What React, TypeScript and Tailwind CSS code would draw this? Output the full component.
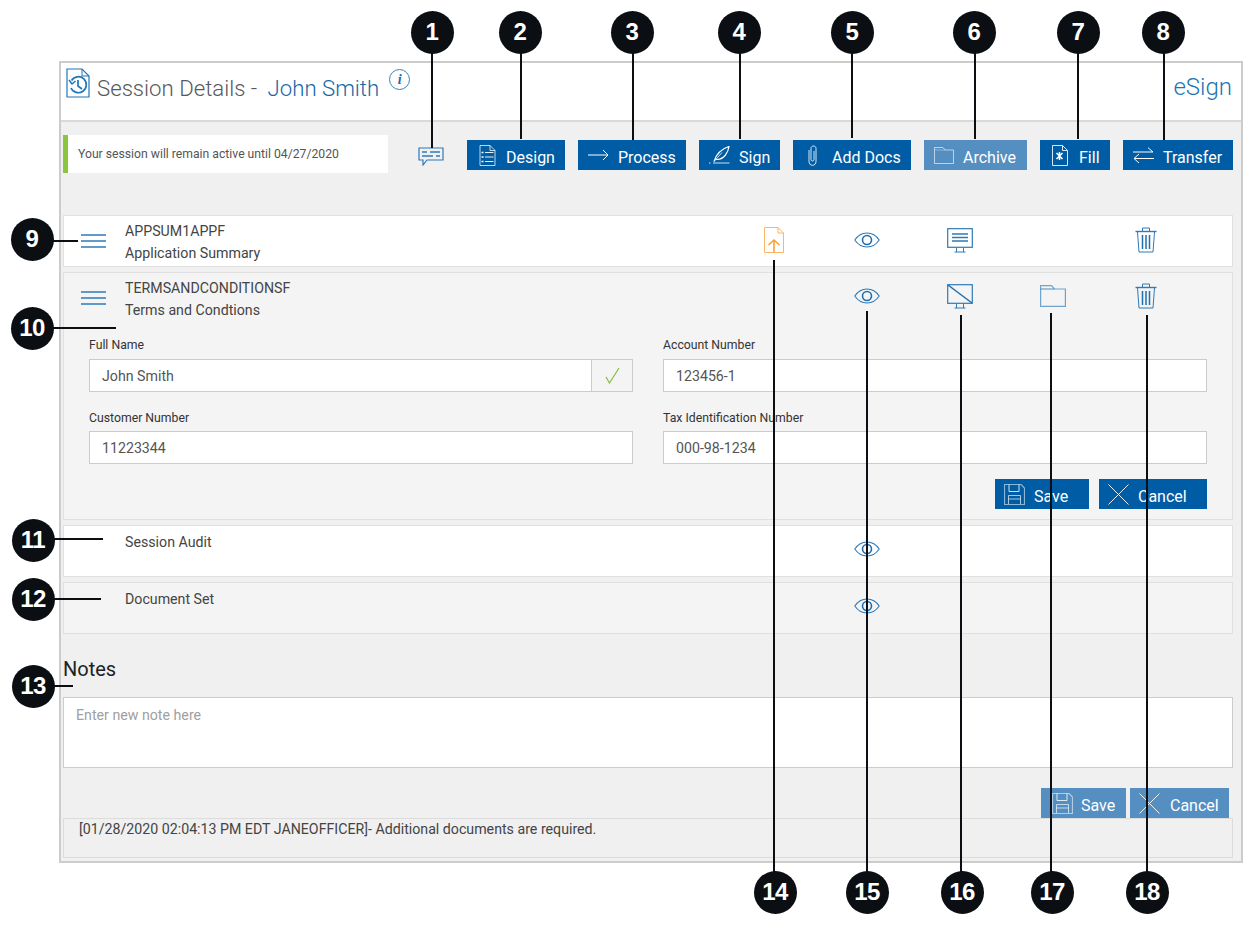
import React from "react";

const BLUE = "#2f7ab8";

const Svg = ({ w, h, children, className }: { w: number; h: number; children: React.ReactNode; className?: string }) => (
  <svg width={w} height={h} viewBox={`0 0 ${w} ${h}`} fill="none" className={"shrink-0 " + (className ?? "")}>
    {children}
  </svg>
);

const DocHistory = () => (
  <Svg w={24} h={30}>
    <path d="M1 1H16L23 8V29H1Z" stroke="#1f77b8" strokeWidth="1.2" />
    <path d="M16 1V8H23" stroke="#1f77b8" strokeWidth="1" />
    <path d="M5.5 12.5A8 8 0 1 1 5 20" stroke="#1f77b8" strokeWidth="1.7" />
    <path d="M3 12L6 16L9.5 13" stroke="#1f77b8" strokeWidth="1.5" />
    <path d="M12 12V18L16 21" stroke="#1f77b8" strokeWidth="1.7" />
  </Svg>
);

const InfoIcon = () => (
  <div className="w-[21px] h-[21px] rounded-full border border-[#3a83bd] flex items-center justify-center text-[14px] leading-none font-bold italic text-[#1b69a8] [font-family:'Liberation_Serif',serif]">
    i
  </div>
);

const ChatIcon = () => (
  <Svg w={26} h={19}>
    <path d="M1 1H25V13H9L5 18V13H1Z" stroke={BLUE} strokeWidth="1.2" />
    <path d="M4 5H9M12 5H22M4 9H15M18 9H22" stroke={BLUE} strokeWidth="1.4" />
  </Svg>
);

const DesignIcon = () => (
  <Svg w={17} h={21}>
    <path d="M1 .5H11L16 5.5V20.5H1Z" stroke="#fff" strokeOpacity=".75" />
    <path d="M11 .5V5.5H16" stroke="#fff" strokeOpacity=".75" />
    <path d="M2.5 7.5H4.5M2.5 12H4.5M2.5 16.5H4.5" stroke="#fff" strokeWidth="1.6" />
    <path d="M6 7.5H14.5M6 12H14.5M6 16.5H14.5" stroke="#fff" strokeOpacity=".9" />
  </Svg>
);

const ArrowIcon = () => (
  <Svg w={21} h={12}>
    <path d="M0 6H20M15 1L20 6L15 11" stroke="#fff" strokeWidth="1" />
  </Svg>
);

const QuillIcon = () => (
  <Svg w={21} h={18}>
    <path d="M0 17H1.5M4 17H20.5" stroke="#fff" strokeOpacity=".8" />
    <path d="M5 15.5C7 9 12 3 20 .5C19 7 15 13 8.5 13.5L6.5 13" stroke="#fff" strokeWidth="1.2" />
    <path d="M5 15.5L13 6.5" stroke="#fff" strokeOpacity=".8" />
  </Svg>
);

const ClipIcon = () => (
  <Svg w={9} h={21}>
    <path d="M1 5V16.5C1 18.8 2.5 20.3 4.5 20.3C6.5 20.3 8 18.8 8 16.5V3.5C8 2 7 1 5.5 1C4 1 3 2 3 3.5V14.5C3 15.5 3.7 16 4.5 16C5.3 16 6 15.5 6 14.5V6" stroke="#fff" strokeOpacity=".85" />
  </Svg>
);

const FolderIconW = () => (
  <Svg w={20} h={17}>
    <path d="M.5 16.5V.5H9L11 3H19.5V16.5Z" stroke="#fff" strokeOpacity=".6" />
    <path d="M.5 3H11" stroke="#fff" strokeOpacity=".35" />
  </Svg>
);

const FillIcon = () => (
  <Svg w={16} h={21}>
    <path d="M.5 .5H10.5L15.5 5.5V20.5H.5Z" stroke="#fff" strokeOpacity=".85" />
    <path d="M10.5 .5V5.5H15.5" stroke="#fff" strokeOpacity=".85" />
    <path d="M4.5 8L10.5 14M10.5 8L4.5 14M7.5 7V15" stroke="#fff" strokeWidth="1.5" />
  </Svg>
);

const TransferIcon = () => (
  <Svg w={21} h={16}>
    <path d="M0 5H20M15 .7L20 5" stroke="#fff" />
    <path d="M21 11.5H1M6 7L1 11.5L6 16" stroke="#fff" />
  </Svg>
);

const SaveIcon = () => (
  <Svg w={21} h={21}>
    <path d="M.5 .5H17L20.5 4V20.5H.5Z" stroke="#fff" strokeOpacity=".55" strokeWidth="1.2" />
    <path d="M5 .5V7.5H15V.5" stroke="#fff" strokeOpacity=".8" />
    <path d="M4.5 20V11.5H16.5V20M4.5 15H16.5" stroke="#fff" strokeOpacity=".65" />
  </Svg>
);

const XIcon = () => (
  <Svg w={21} h={21}>
    <path d="M.5 .5L20.5 20.5M20.5 .5L.5 20.5" stroke="#fff" strokeOpacity=".9" />
  </Svg>
);

const CheckIcon = () => (
  <Svg w={15} h={17}>
    <path d="M1 10L4.5 16L14 1" stroke="#84bd45" strokeWidth="1.2" />
  </Svg>
);

const Hamburger = () => (
  <Svg w={25} h={14}>
    <path d="M0 1H25M0 7H25M0 13H25" stroke={BLUE} strokeWidth="1.3" />
  </Svg>
);

const UploadIcon = () => (
  <Svg w={20} h={26}>
    <path d="M.5 .5H14L19.5 6V25.5H.5Z" stroke="#fcb666" />
    <path d="M14 .5V6H19.5" stroke="#fcb666" />
    <path d="M10 25V13M4.5 18L10 13L15.5 18" stroke="#f9a03c" strokeWidth="1.6" />
  </Svg>
);

const EyeIcon = () => (
  <Svg w={26} h={16}>
    <path d="M.8 8C4 3.2 8.5 1 13 1C17.5 1 22 3.2 25.2 8C22 12.8 17.5 15 13 15C8.5 15 4 12.8 .8 8Z" stroke={BLUE} strokeWidth="1.1" />
    <circle cx="13" cy="8" r="4.5" stroke="#1f6fb0" strokeWidth="1.6" />
  </Svg>
);

const MonitorIcon = ({ off }: { off?: boolean }) => (
  <Svg w={26} h={25}>
    <rect x=".7" y=".7" width="24.6" height="18.6" stroke={BLUE} strokeWidth="1.2" />
    {off ? (
      <path d="M1 1L25 19" stroke="#1f6fb0" strokeWidth="1.5" />
    ) : (
      <path d="M5 6H21M5 9.5H21M5 13H21" stroke="#2f7ab8" strokeWidth="1.4" />
    )}
    <path d="M9.5 19.5V24M16.5 19.5V24M7.5 24H18.5" stroke={BLUE} />
  </Svg>
);

const FolderBlue = () => (
  <Svg w={26} h={22}>
    <path d="M.6 21.4V.6H11.5L14.5 4H25.4V21.4Z" stroke="#6fa3cc" strokeWidth="1.2" />
    <path d="M.6 4H14.5" stroke="#4a8cc0" />
  </Svg>
);

const TrashIcon = () => (
  <Svg w={22} h={26}>
    <path d="M.5 4.5H21.5" stroke={BLUE} strokeWidth="1.4" />
    <path d="M7.5 4V1H14.5V4" stroke={BLUE} />
    <path d="M2.5 5L4 25H18L19.5 5" stroke={BLUE} />
    <path d="M7.5 8V22M11 8V22M14.5 8V22" stroke="#1f6fb0" strokeWidth="1.5" />
  </Svg>
);

const ActionButton = ({
  icon,
  label,
  width,
  light,
  gap,
  pl,
}: {
  icon: React.ReactNode;
  label: string;
  width: string;
  light?: boolean;
  gap: string;
  pl: string;
}) => (
  <button className={`h-[30px] flex items-center text-white text-[16px] ${width} ${gap} ${pl} ${light ? "bg-[#558fc1]" : "bg-[#005da5]"}`}>
    {icon}
    <span className="leading-none pt-[6px]">{label}</span>
  </button>
);

const IconCell = ({ children }: { children?: React.ReactNode }) => (
  <div className="w-[93px] flex items-center justify-center">{children}</div>
);

const RowIcons = ({ a, b, c, d, e }: { a?: React.ReactNode; b?: React.ReactNode; c?: React.ReactNode; d?: React.ReactNode; e?: React.ReactNode }) => (
  <div className="flex">
    <IconCell>{a}</IconCell>
    <IconCell>{b}</IconCell>
    <IconCell>{c}</IconCell>
    <IconCell>{d}</IconCell>
    <IconCell>{e}</IconCell>
  </div>
);

const Field = ({ label, value, check, tight }: { label: string; value: string; check?: boolean; tight?: boolean }) => (
  <div>
    <div className={`text-[12.25px] leading-[14px] text-[#333] ${tight ? "mb-[6px]" : "mb-[7px]"}`}>{label}</div>
    <div className="h-[33px] bg-white border border-[#ccc] flex items-center text-[14.2px] text-[#555]">
      <span className="flex-1 pl-[12px] pt-[2px]">{value}</span>
      {check && (
        <div className="w-[41px] h-full bg-[#f4f4f4] border-l border-[#ccc] flex items-center justify-center">
          <CheckIcon />
        </div>
      )}
    </div>
  </div>
);

const Badge = ({ n, x, y }: { n: number; x: number; y: number }) => (
  <div
    className="absolute w-[43px] h-[43px] rounded-full bg-[#0b0e12] text-white flex items-center justify-center text-[24px] font-bold [font-family:'Liberation_Sans',sans-serif] tracking-[-0.5px]"
    style={{ left: x - 21.5, top: y - 21.5 }}
  >
    {n}
  </div>
);

const VLine = ({ x, y1, y2 }: { x: number; y1: number; y2: number }) => (
  <div className="absolute w-[2px] bg-[#0b0e12]" style={{ left: x - 1, top: y1, height: y2 - y1 }} />
);

const HLine = ({ y, x1, x2 }: { y: number; x1: number; x2: number }) => (
  <div className="absolute h-[2px] bg-[#0b0e12]" style={{ top: y - 1, left: x1, width: x2 - x1 }} />
);

const topCallouts = [
  { n: 1, cx: 432, lx: 432, end: 148 },
  { n: 2, cx: 520, lx: 521, end: 139 },
  { n: 3, cx: 632, lx: 633, end: 140 },
  { n: 4, cx: 739, lx: 740, end: 139 },
  { n: 5, cx: 852, lx: 852, end: 138 },
  { n: 6, cx: 974, lx: 975, end: 139 },
  { n: 7, cx: 1078, lx: 1078, end: 139 },
  { n: 8, cx: 1163, lx: 1164, end: 140 },
];

const leftCallouts = [
  { n: 9, cy: 239, ly: 241, cx: 32, end: 78 },
  { n: 10, cy: 328, ly: 328, cx: 32, end: 116 },
  { n: 11, cy: 540, ly: 539, cx: 33, end: 103 },
  { n: 12, cy: 599, ly: 599, cx: 33, end: 101 },
  { n: 13, cy: 686, ly: 686, cx: 33, end: 73 },
];

const bottomCallouts = [
  { n: 14, cx: 775, lx: 774, start: 260 },
  { n: 15, cx: 867, lx: 867, start: 311 },
  { n: 16, cx: 962, lx: 961, start: 315 },
  { n: 17, cx: 1052, lx: 1051, start: 313 },
  { n: 18, cx: 1147, lx: 1147, start: 315 },
];

export default function App() {
  return (
    <div className="relative w-[1243px] h-[926px] bg-white overflow-hidden [font-family:Roboto,sans-serif] pt-[61px] pl-[59px]">
      <div className="w-[1184px] h-[802px] border-2 border-[#cccccc] bg-[#f0f0f0] flex flex-col">
        {/* Header */}
        <header className="h-[59px] shrink-0 bg-white border-b-2 border-[#d9d9d9] flex items-start pl-[5px] pr-[9px]">
          <div className="mt-[5px]">
            <DocHistory />
          </div>
          <div className="ml-[7px] mt-[11px] text-[22.2px] leading-[28px] font-light text-[#58595b] whitespace-pre">Session Details - </div>
          <div className="ml-[5px] mt-[11px] text-[22.2px] leading-[28px] font-light text-[#1567a8]">John Smith</div>
          <div className="ml-[10px] mt-[6px]">
            <InfoIcon />
          </div>
          <div className="ml-auto mt-[10px] text-[24px] leading-[28px] font-light text-[#2074b6]">eSign</div>
        </header>

        {/* Toolbar */}
        <div className="pl-[2px] pr-[8px] mt-[13px] h-[38px] shrink-0 flex items-start">
          <div className="w-[325px] h-[38px] bg-white border-l-[5px] border-[#8cc63f] flex items-center pl-[10px] text-[12.2px] text-[#555]">
            Your session will remain active until 04/27/2020
          </div>
          <div className="w-[79px] h-[38px] pt-[12px] flex justify-center pl-[6px]">
            <ChatIcon />
          </div>
          <div className="flex gap-[13px] mt-[5px]">
            <ActionButton icon={<DesignIcon />} label="Design" width="w-[98px]" pl="pl-[12px]" gap="gap-[10px]" />
            <ActionButton icon={<ArrowIcon />} label="Process" width="w-[108px]" pl="pl-[10px]" gap="gap-[9px]" />
            <ActionButton icon={<QuillIcon />} label="Sign" width="w-[81px]" pl="pl-[10px]" gap="gap-[9px]" />
            <ActionButton icon={<ClipIcon />} label="Add Docs" width="w-[118px]" pl="pl-[15px]" gap="gap-[15px]" />
            <ActionButton icon={<FolderIconW />} label="Archive" width="w-[103px]" pl="pl-[10px]" gap="gap-[9px]" light />
            <ActionButton icon={<FillIcon />} label="Fill" width="w-[70px]" pl="pl-[12px]" gap="gap-[11px]" />
            <ActionButton icon={<TransferIcon />} label="Transfer" width="w-[110px]" pl="pl-[10px]" gap="gap-[9px]" />
          </div>
        </div>

        {/* Rows */}
        <div className="mt-[42px] pl-[2px] pr-[8px] flex flex-col gap-[5px] text-[14.2px] text-[#444]">
          <div className="h-[52px] bg-white border border-[#e0e0e0] flex">
            <div className="w-[61px] flex items-center justify-center pb-[1px] pr-[2px]">
              <Hamburger />
            </div>
            <div className="flex-1 pt-[4px] leading-[22px]">
              <div>APPSUM1APPF</div>
              <div>Application Summary</div>
            </div>
            <div className="pr-[40px] flex pb-[2px]">
              <RowIcons a={<UploadIcon />} b={<EyeIcon />} c={<MonitorIcon />} e={<TrashIcon />} />
            </div>
          </div>

          <div className="h-[248px] bg-[#f4f4f4] border border-[#e0e0e0]">
            <div className="h-[52px] flex">
              <div className="w-[61px] flex items-start justify-center pt-[18px] pr-[2px]">
                <Hamburger />
              </div>
              <div className="flex-1 pt-[4px] leading-[22px]">
                <div>TERMSANDCONDITIONSF</div>
                <div>Terms and Condtions</div>
              </div>
              <div className="pr-[40px] flex items-start pt-[10px]">
                <RowIcons b={<EyeIcon />} c={<MonitorIcon off />} d={<FolderBlue />} e={<TrashIcon />} />
              </div>
            </div>
            <div className="pl-[25px] pr-[25px] mt-[13px] grid grid-cols-2 gap-x-[30px] gap-y-[19px]">
              <Field label="Full Name" value="John Smith" check />
              <Field label="Account Number" value="123456-1" />
              <Field label="Customer Number" value="11223344" tight />
              <Field label="Tax Identification Number" value="000-98-1234" tight />
            </div>
            <div className="mt-[15px] pr-[25px] flex justify-end gap-[10px]">
              <ActionButton icon={<SaveIcon />} label="Save" width="w-[94px]" pl="pl-[9px]" gap="gap-[9px]" />
              <ActionButton icon={<XIcon />} label="Cancel" width="w-[108px]" pl="pl-[9px]" gap="gap-[9px]" />
            </div>
          </div>

          <div className="h-[52px] bg-white border border-[#e0e0e0] flex">
            <div className="w-[61px]" />
            <div className="flex-1 pt-[5px] leading-[22px]">Session Audit</div>
            <div className="pr-[40px] flex items-start pt-[15px]">
              <RowIcons b={<EyeIcon />} />
            </div>
          </div>

          <div className="h-[52px] bg-[#f4f4f4] border border-[#e0e0e0] flex">
            <div className="w-[61px]" />
            <div className="flex-1 pt-[5px] leading-[22px]">Document Set</div>
            <div className="pr-[40px] flex items-start pt-[15px]">
              <RowIcons b={<EyeIcon />} />
            </div>
          </div>
        </div>

        {/* Notes */}
        <div className="pl-[2px] pr-[8px] mt-[23px]">
          <div className="text-[20px] leading-[24px] text-[#222]">Notes</div>
          <div className="mt-[16px] h-[71px] bg-white border border-[#ccc] pl-[12px] pt-[7px] text-[14.2px] leading-[20px] text-[#a0a0a0]">
            Enter new note here
          </div>
          <div className="mt-[20px] pr-[4px] flex justify-end gap-[4px]">
            <ActionButton icon={<SaveIcon />} label="Save" width="w-[85px]" pl="pl-[11px]" gap="gap-[8px]" light />
            <ActionButton icon={<XIcon />} label="Cancel" width="w-[99px]" pl="pl-[9px]" gap="gap-[10px]" light />
          </div>
          <div className="h-[40px] border border-[#dcdcdc] pl-[15px] text-[14.2px] leading-[20px] text-[#444]">
            [01/28/2020 02:04:13 PM EDT JANEOFFICER]- Additional documents are required.
          </div>
        </div>
      </div>

      {/* Callouts */}
      {topCallouts.map((c) => (
        <React.Fragment key={c.n}>
          <VLine x={c.lx} y1={40} y2={c.end} />
          <Badge n={c.n} x={c.cx} y={32} />
        </React.Fragment>
      ))}
      {leftCallouts.map((c) => (
        <React.Fragment key={c.n}>
          <HLine y={c.ly} x1={c.cx} x2={c.end} />
          <Badge n={c.n} x={c.cx} y={c.cy} />
        </React.Fragment>
      ))}
      {bottomCallouts.map((c) => (
        <React.Fragment key={c.n}>
          <VLine x={c.lx} y1={c.start} y2={885} />
          <Badge n={c.n} x={c.cx} y={892} />
        </React.Fragment>
      ))}
    </div>
  );
}
